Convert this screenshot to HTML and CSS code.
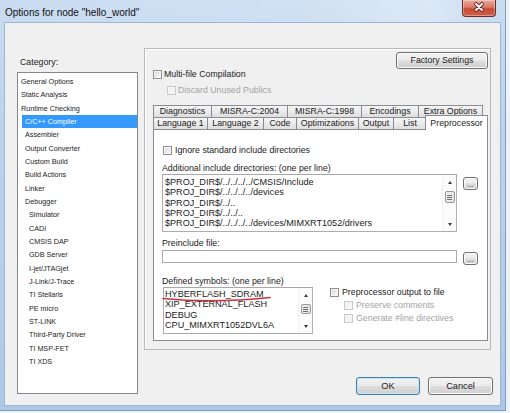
FILE: index.html
```html
<!DOCTYPE html>
<html>
<head>
<meta charset="utf-8">
<title>Options for node "hello_world"</title>
<link rel="stylesheet" href="styles.css">
</head>
<body>
<div class="window">
  <div class="titlebar">
    <span class="title">Options for node "hello_world"</span>
    <div class="close">
      <svg width="34" height="17" viewBox="0 0 34 17">
        <path d="M14 5 L20 11 M20 5 L14 11" stroke="#5a1a12" stroke-width="3.6" stroke-linecap="round" fill="none"/>
        <path d="M14 5 L20 11 M20 5 L14 11" stroke="#ffffff" stroke-width="2" stroke-linecap="round" fill="none"/>
      </svg>
    </div>
  </div>
  <div class="frame-body">
    <div class="client">
      <div class="left">
        <div class="cat-label">Category:</div>
        <ul class="catlist">
          <li class="l0">General Options</li>
          <li class="l0">Static Analysis</li>
          <li class="l0">Runtime Checking</li>
          <li class="l1 selected">C/C++ Compiler</li>
          <li class="l1">Assembler</li>
          <li class="l1">Output Converter</li>
          <li class="l1">Custom Build</li>
          <li class="l1">Build Actions</li>
          <li class="l1">Linker</li>
          <li class="l1">Debugger</li>
          <li class="l2">Simulator</li>
          <li class="l2">CADI</li>
          <li class="l2">CMSIS DAP</li>
          <li class="l2">GDB Server</li>
          <li class="l2">I-jet/JTAGjet</li>
          <li class="l2">J-Link/J-Trace</li>
          <li class="l2">TI Stellaris</li>
          <li class="l2">PE micro</li>
          <li class="l2">ST-LINK</li>
          <li class="l2">Third-Party Driver</li>
          <li class="l2">TI MSP-FET</li>
          <li class="l2">TI XDS</li>
        </ul>
      </div>
      <div class="right">
        <div class="panel">
          <div class="panel-head"><div class="btn factory">Factory Settings</div></div>
          <div class="chk-row multi"><span class="cb"></span><span>Multi-file Compilation</span></div>
          <div class="chk-row discard disabled"><span class="cb"></span><span>Discard Unused Publics</span></div>
          <div class="tabs">
            <div class="tabrow back">
              <div class="tab t-diag">Diagnostics</div>
              <div class="tab t-m2004">MISRA-C:2004</div>
              <div class="tab t-m1998">MISRA-C:1998</div>
              <div class="tab t-enc">Encodings</div>
              <div class="tab t-extra">Extra Options</div>
            </div>
            <div class="tabrow front">
              <div class="tab t-lang1">Language 1</div>
              <div class="tab t-lang2">Language 2</div>
              <div class="tab t-code">Code</div>
              <div class="tab t-opt">Optimizations</div>
              <div class="tab t-out">Output</div>
              <div class="tab t-list">List</div>
              <div class="tab t-pre active">Preprocessor</div>
            </div>
            <div class="page">
              <div class="chk-row ignore"><span class="cb"></span><span>Ignore standard include directories</span></div>
              <div class="field-label lbl-add">Additional include directories: (one per line)</div>
              <div class="field-row inc-row">
                <div class="textbox inc">
                  <div class="lines">
                    <div>$PROJ_DIR$/../../../../CMSIS/Include</div>
                    <div>$PROJ_DIR$/../../../../devices</div>
                    <div>$PROJ_DIR$/../..</div>
                    <div>$PROJ_DIR$/../../..</div>
                    <div>$PROJ_DIR$/../../../../devices/MIMXRT1052/drivers</div>
                  </div>
                  <div class="sb">
                    <div class="sb-up"><span class="arr-up"></span></div>
                    <div class="sb-thumb"></div>
                    <div class="sb-fill"></div>
                    <div class="sb-down"><span class="arr-down"></span></div>
                  </div>
                </div>
                <div class="btn dots dots-inc">...</div>
              </div>
              <div class="field-label lbl-pre">Preinclude file:</div>
              <div class="field-row pre-row">
                <div class="textbox single"></div>
                <div class="btn dots dots-pre">...</div>
              </div>
              <div class="field-label lbl-def">Defined symbols: (one per line)</div>
              <div class="field-row def-row">
                <div class="textbox defs">
                  <div class="lines">
                    <div>HYBERFLASH_SDRAM</div>
                    <div>XIP_EXTERNAL_FLASH</div>
                    <div>DEBUG</div>
                    <div>CPU_MIMXRT1052DVL6A</div>
                  </div>
                  <div class="sb">
                    <div class="sb-up"><span class="arr-up"></span></div>
                    <div class="sb-thumb small"></div>
                    <div class="sb-fill"></div>
                    <div class="sb-down"><span class="arr-down"></span></div>
                  </div>
                  <svg class="redmark" width="112" height="8" viewBox="0 0 112 8">
                    <path d="M1 3.5 C 30 6.5, 70 6.5, 108 2.5" stroke="#c8323a" stroke-width="1.4" fill="none" stroke-linecap="round"/>
                  </svg>
                </div>
                <div class="pp-group">
                  <div class="chk-row pp"><span class="cb"></span><span>Preprocessor output to file</span></div>
                  <div class="chk-row sub disabled"><span class="cb"></span><span>Preserve comments</span></div>
                  <div class="chk-row sub disabled"><span class="cb"></span><span>Generate #line directives</span></div>
                </div>
              </div>
            </div>
          </div>
        </div>
        <div class="dlg-buttons">
          <div class="btn ok">OK</div>
          <div class="btn cancel">Cancel</div>
        </div>
      </div>
    </div>
  </div>
</div>
</body>
</html>
```
FILE: styles.css
```css
* { box-sizing: border-box; }
html, body { margin: 0; padding: 0; }
body {
  width: 510px;
  height: 413px;
  overflow: hidden;
  background: #eef2f7;
  font-family: "Liberation Sans", Arial, sans-serif;
  color: #1b1b1b;
}

.window {
  width: 506px;
  height: 411px;
  display: flex;
  flex-direction: column;
  background: linear-gradient(180deg, #c9dcf1 0%, #bcd3ed 30%, #adc8e7 100%);
  border-right: 1px solid #7f9dc0;
  border-bottom: 1px solid #7f9dc0;
}

/* title bar */
.titlebar {
  height: 22px;
  display: flex;
  align-items: flex-start;
  background: linear-gradient(90deg, rgba(255,255,255,0) 0%, rgba(255,255,255,0.15) 60%, rgba(255,255,255,0.35) 85%, rgba(255,255,255,0) 100%);
}
.title {
  font-size: 10px;
  line-height: 12px;
  margin: 7px 0 0 5px;
  color: #111;
  white-space: nowrap;
}
.close {
  margin-left: auto;
  margin-right: 9px;
  width: 34px;
  height: 17px;
  border: 1px solid #6d2a22;
  border-top: none;
  border-radius: 0 0 4px 4px;
  background: linear-gradient(180deg, #e9a99a 0%, #d9796a 45%, #c74a36 55%, #d2604a 100%);
  box-shadow: inset 0 0 0 1px rgba(255,255,255,0.35);
}
.close svg { display: block; margin: -1px 0 0 -1px; }

/* frame body */
.frame-body {
  flex: 1;
  display: flex;
  padding: 0 4px 4px 4px;
}
.client {
  flex: 1;
  display: flex;
  background: #f0f0f0;
  border: 1px solid #9fb5d1;
}

/* left column */
.left {
  padding: 33px 0 0 12px;
  display: flex;
  flex-direction: column;
}
.cat-label {
  font-size: 8.8px;
  line-height: 12px;
  height: 12px;
  margin-bottom: 4px;
  padding-left: 3px;
}
.catlist {
  list-style: none;
  margin: 0;
  width: 121px;
  height: 322px;
  padding: 2px 0 0 0;
  background: #fff;
  border: 1px solid #828790;
  font-size: 7.2px;
}
.catlist li {
  height: 13.33px;
  line-height: 13.33px;
  white-space: nowrap;
  color: #1c1c1c;
}
.catlist .l0 { padding-left: 3px; }
.catlist .l1 { margin-left: 4px; padding-left: 3px; }
.catlist .l2 { margin-left: 8px; padding-left: 3px; }
.catlist .selected {
  background: #3399ff;
  color: #fff;
}

/* right column */
.right {
  margin-left: 6px;
  padding-top: 25px;
  width: 349px;
  display: flex;
  flex-direction: column;
}
.panel {
  width: 347px;
  height: 302px;
  border: 1px solid #b9b9b9;
  box-shadow: inset 1px 1px 0 #ffffff;
  padding: 3px 2px 0 8px;
  display: flex;
  flex-direction: column;
  font-size: 8.8px;
}
.panel-head {
  display: flex;
  justify-content: flex-end;
}

/* buttons */
.btn {
  border: 1px solid #707070;
  border-radius: 3px;
  background: linear-gradient(180deg, #f2f2f2 0%, #ebebeb 48%, #dddddd 52%, #cfcfcf 100%);
  box-shadow: inset 0 0 0 1px #fbfbfb;
  text-align: center;
  color: #1b1b1b;
  white-space: nowrap;
}
.factory {
  width: 92px;
  height: 17px;
  line-height: 15px;
  font-size: 8.7px;
}
.dlg-buttons {
  display: flex;
  justify-content: flex-end;
  gap: 8px;
  margin-top: 27px;
}
.dlg-buttons .btn {
  height: 18px;
  line-height: 16px;
  font-size: 9.2px;
}
.ok {
  width: 64px;
  border-color: #3c7fb1;
  box-shadow: inset 0 0 0 1px #c6e4f7;
}
.cancel { width: 65px; }

/* checkboxes */
.chk-row {
  display: flex;
  align-items: center;
  height: 10px;
  line-height: 10px;
  white-space: nowrap;
}
.cb {
  width: 9px;
  height: 9px;
  flex: none;
  border: 1px solid #8e8f8f;
  background: linear-gradient(135deg, #d6d6d6 0%, #f4f4f4 80%, #ffffff 100%);
  box-shadow: inset 0 0 0 1px #f6f6f6;
  margin-right: 2px;
}
.disabled { color: #a3a3a3; }
.disabled .cb {
  border-color: #c8c8c8;
  background: linear-gradient(135deg, #ececec 0%, #fafafa 100%);
}
.multi { margin-top: 0; }
.discard { margin-top: 6px; margin-left: 14px; }

/* tabs */
.tabs {
  margin-top: 10px;
  width: 335px;
  display: flex;
  flex-direction: column;
}
.tabrow {
  display: flex;
  align-items: flex-end;
  height: 12px;
}
.tab {
  height: 12px;
  line-height: 11px;
  border: 1px solid #898c95;
  border-bottom: none;
  background: linear-gradient(180deg, #f5f5f5 0%, #ebebeb 50%, #dedede 100%);
  text-align: center;
  white-space: nowrap;
  margin-left: -1px;
  font-size: 8.8px;
}
.tab:first-child { margin-left: 0; }
.t-diag { width: 59px; }
.t-m2004 { width: 77px; }
.t-m1998 { width: 75px; }
.t-enc { width: 58px; }
.t-extra { width: 65px; }
.t-lang1 { width: 55px; }
.t-lang2 { width: 57px; }
.t-code { width: 34px; }
.t-opt { width: 63px; }
.t-out { width: 36px; }
.t-list { width: 34px; }
.tab.active {
  width: 63px;
  height: 15px;
  line-height: 14px;
  margin-left: -2px;
  margin-bottom: -1px;
  background: #ffffff;
  position: relative;
  z-index: 2;
}
.page {
  height: 212px;
  border: 1px solid #898c95;
  background: #ffffff;
  padding: 0 0 0 8px;
  display: flex;
  flex-direction: column;
}
.ignore { margin-top: 15px; margin-left: 1px; }
.ignore .cb { margin-right: 3px; }
.field-label {
  height: 12px;
  line-height: 12px;
  white-space: nowrap;
}
.lbl-add { margin-top: 7px; }
.lbl-pre { margin-top: 5px; }
.lbl-def { margin-top: 10px; }

.field-row {
  display: flex;
  align-items: flex-start;
}
.textbox {
  background: #fff;
  border: 1px solid #abadb3;
  border-top-color: #a5a7ad;
  display: flex;
  position: relative;
}
.textbox .lines {
  flex: 1;
  font-size: 9.1px;
  line-height: 10.25px;
  white-space: nowrap;
  overflow: hidden;
}
.inc { width: 295px; height: 58px; }
.inc .lines { padding: 2px 0 0 2px; }
.single { width: 295px; height: 13px; }
.defs { width: 150px; height: 47px; margin-left: 1px; }
.defs .lines { padding: 1px 0 0 1px; }

.dots {
  width: 15px;
  height: 13px;
  margin-left: 6px;
  font-size: 7px;
  line-height: 13px;
  color: #333;
}
.dots-inc { margin-top: 3px; }
.pre-row { margin-top: 1px; }
.dots-pre { margin-top: 2px; }

/* scrollbar */
.sb {
  width: 14px;
  display: flex;
  flex-direction: column;
  align-items: center;
  background: #fbfbfb;
  border-left: 1px solid #f0f0f0;
}
.sb-up, .sb-down {
  height: 14px;
  width: 100%;
  display: flex;
  align-items: center;
  justify-content: center;
}
.arr-up {
  width: 0; height: 0;
  border-left: 2.5px solid transparent;
  border-right: 2.5px solid transparent;
  border-bottom: 3px solid #3a3a3a;
}
.arr-down {
  width: 0; height: 0;
  border-left: 2.5px solid transparent;
  border-right: 2.5px solid transparent;
  border-top: 3px solid #3a3a3a;
}
.sb-thumb {
  width: 10px;
  height: 12px;
  margin-top: 2px;
  border: 1px solid #979797;
  border-radius: 2px;
  background: linear-gradient(90deg, #f2f2f2, #e2e2e2);
  display: flex;
  align-items: center;
  justify-content: center;
}
.sb-thumb::after {
  content: "";
  width: 5px;
  height: 5px;
  background: repeating-linear-gradient(180deg, #6f6f6f 0 1px, transparent 1px 2px);
}
.sb-thumb.small { height: 10px; }
.sb-fill { flex: 1; }

.redmark {
  position: absolute;
  left: -2px;
  top: 7px;
}

.pp-group {
  margin-left: 17px;
  display: flex;
  flex-direction: column;
}
.pp-group .cb { margin-right: 3px; }
.pp-group .sub { margin-top: 3px; margin-left: 14px; }
.pp-group .pp + .sub { margin-top: 3px; }
```
